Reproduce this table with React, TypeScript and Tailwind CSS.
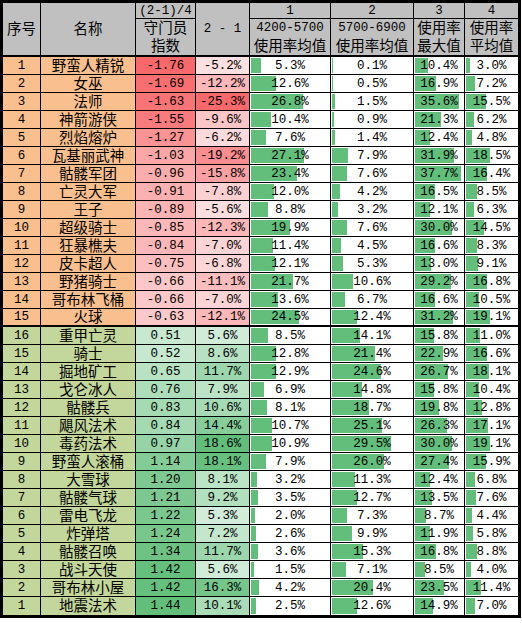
// Card usage sheet: two groups (orange = worst index, green = best),
// colour-scaled index / diff columns and data bars on the four rate columns.

type Row = [string, string, number, number, number, number, number, number];

const warm: Row[] = [
  ['1', '野蛮人精锐', -1.76, -5.2, 5.3, 0.1, 10.4, 3.0],
  ['2', '女巫', -1.69, -12.2, 12.6, 0.5, 16.9, 7.2],
  ['3', '法师', -1.63, -25.3, 26.8, 1.5, 35.6, 15.5],
  ['4', '神箭游侠', -1.55, -9.6, 10.4, 0.9, 21.3, 6.2],
  ['5', '烈焰熔炉', -1.27, -6.2, 7.6, 1.4, 12.4, 4.8],
  ['6', '瓦基丽武神', -1.03, -19.2, 27.1, 7.9, 31.9, 18.5],
  ['7', '骷髅军团', -0.96, -15.8, 23.4, 7.6, 37.7, 16.4],
  ['8', '亡灵大军', -0.91, -7.8, 12.0, 4.2, 16.5, 8.5],
  ['9', '王子', -0.89, -5.6, 8.8, 3.2, 12.1, 6.3],
  ['10', '超级骑士', -0.85, -12.3, 19.9, 7.6, 30.0, 14.5],
  ['11', '狂暴樵夫', -0.84, -7.0, 11.4, 4.5, 16.6, 8.3],
  ['12', '皮卡超人', -0.75, -6.8, 12.1, 5.3, 13.0, 9.1],
  ['13', '野猪骑士', -0.66, -11.1, 21.7, 10.6, 29.2, 16.8],
  ['14', '哥布林飞桶', -0.66, -7.0, 13.6, 6.7, 16.6, 10.5],
  ['15', '火球', -0.63, -12.1, 24.5, 12.4, 31.2, 19.1],
];

const cool: Row[] = [
  ['16', '重甲亡灵', 0.51, 5.6, 8.5, 14.1, 15.8, 11.0],
  ['15', '骑士', 0.52, 8.6, 12.8, 21.4, 22.9, 16.6],
  ['14', '掘地矿工', 0.65, 11.7, 12.9, 24.6, 26.7, 18.1],
  ['13', '戈仑冰人', 0.76, 7.9, 6.9, 14.8, 15.8, 10.4],
  ['12', '骷髅兵', 0.83, 10.6, 8.1, 18.7, 19.8, 12.8],
  ['11', '飓风法术', 0.84, 14.4, 10.7, 25.1, 26.3, 17.1],
  ['10', '毒药法术', 0.97, 18.6, 10.9, 29.5, 30.0, 19.1],
  ['9', '野蛮人滚桶', 1.14, 18.1, 7.9, 26.0, 27.4, 15.9],
  ['8', '大雪球', 1.2, 8.1, 3.2, 11.3, 12.4, 6.8],
  ['7', '骷髅气球', 1.21, 9.2, 3.5, 12.7, 13.5, 7.6],
  ['6', '雷电飞龙', 1.22, 5.3, 2.0, 7.3, 8.7, 4.4],
  ['5', '炸弹塔', 1.24, 7.2, 2.6, 9.9, 11.9, 5.8],
  ['4', '骷髅召唤', 1.34, 11.7, 3.6, 15.3, 16.8, 8.8],
  ['3', '战斗天使', 1.42, 5.6, 1.5, 7.1, 8.5, 4.0],
  ['2', '哥布林小屋', 1.42, 16.3, 4.2, 20.4, 23.5, 11.4],
  ['1', '地震法术', 1.44, 10.1, 2.5, 12.6, 14.9, 7.0],
];

// white -> red below zero, white -> green above
function scale(v: number, min: number, max: number) {
  const to = v < 0 ? [248, 105, 107] : [99, 190, 123];
  const t = Math.min(1, v < 0 ? v / min : v / max);
  const c = to.map((x) => Math.round(255 + (x - 255) * t));
  return `rgb(${c[0]},${c[1]},${c[2]})`;
}

const mono = "font-['Liberation_Mono',monospace] text-[12.5px]";
const cjk = "font-['Liberation_Sans','Noto_Sans_CJK_SC',sans-serif] text-[14.5px]";
const cell = 'flex items-center justify-center border-black text-black leading-[16px]';
const head = 'flex flex-col items-center justify-center border-black bg-[#c0c0c0] text-black leading-[18px]';

function Bar({ v, inner, last, bottom }: { v: number; inner: number; last?: boolean; bottom: string }) {
  return (
    <div className={`relative ${cell} ${bottom} ${last ? '' : 'border-r'} ${mono}`}>
      <div
        className="absolute top-[1px] bottom-[1px] left-[1px] bg-[#63be7b]"
        style={{ width: (inner * v) / 40 }}
      />
      <span className="relative">{v.toFixed(1)}%</span>
    </div>
  );
}

function DataRow({ r, bg, bottom }: { r: Row; bg: string; bottom: string }) {
  return (
    <>
      <div className={`${cell} ${bottom} border-r ${bg} ${mono}`}>{r[0]}</div>
      <div className={`${cell} ${bottom} border-r ${bg} ${cjk}`}>{r[1]}</div>
      <div className={`${cell} ${bottom} border-r ${mono}`} style={{ background: scale(r[2], -1.76, 1.44) }}>
        {r[2].toFixed(2)}
      </div>
      <div className={`${cell} ${bottom} border-r ${mono}`} style={{ background: scale(r[3], -25.3, 18.6) }}>
        {r[3].toFixed(1)}%
      </div>
      <Bar v={r[4]} inner={78} bottom={bottom} />
      <Bar v={r[5]} inner={80} bottom={bottom} />
      <Bar v={r[6]} inner={49} bottom={bottom} />
      <Bar v={r[7]} inner={51} bottom={bottom} last />
    </>
  );
}

export default function App() {
  return (
    <div className="min-h-screen bg-white">
      <div className="w-[521px] border-[3px] border-black">
        <div className="grid grid-cols-[38px_95px_60px_54px_81px_83px_51px_53px] grid-rows-[16px_38px_repeat(31,18px)]">
          <div className={`${head} row-span-2 border-r border-b-2 ${cjk}`}>序号</div>
          <div className={`${head} row-span-2 border-r border-b-2 ${cjk}`}>名称</div>
          <div className={`${head} border-r border-b ${mono} leading-[15px]`}>(2-1)/4</div>
          <div className={`${head} row-span-2 border-r border-b-2 ${mono}`}>2 - 1</div>
          <div className={`${head} border-r border-b ${mono} leading-[15px]`}>1</div>
          <div className={`${head} border-r border-b ${mono} leading-[15px]`}>2</div>
          <div className={`${head} border-r border-b ${mono} leading-[15px]`}>3</div>
          <div className={`${head} border-b ${mono} leading-[15px]`}>4</div>

          <div className={`${head} border-r border-b-2 ${cjk}`}>
            <span>守门员</span>
            <span>指数</span>
          </div>
          <div className={`${head} border-r border-b-2 ${cjk}`}>
            <span className={mono}>4200-5700</span>
            <span>使用率均值</span>
          </div>
          <div className={`${head} border-r border-b-2 ${cjk}`}>
            <span className={mono}>5700-6900</span>
            <span>使用率均值</span>
          </div>
          <div className={`${head} border-r border-b-2 ${cjk}`}>
            <span>使用率</span>
            <span>最大值</span>
          </div>
          <div className={`${head} border-b-2 ${cjk}`}>
            <span>使用率</span>
            <span>平均值</span>
          </div>

          {warm.map((r, i) => (
            <DataRow
              key={'w' + i}
              r={r}
              bg="bg-[#fabf8f]"
              bottom={i === warm.length - 1 ? 'border-b-2' : 'border-b'}
            />
          ))}
          {cool.map((r, i) => (
            <DataRow
              key={'c' + i}
              r={r}
              bg="bg-[#c3d69b]"
              bottom={i === cool.length - 1 ? '' : 'border-b'}
            />
          ))}
        </div>
      </div>
    </div>
  );
}
